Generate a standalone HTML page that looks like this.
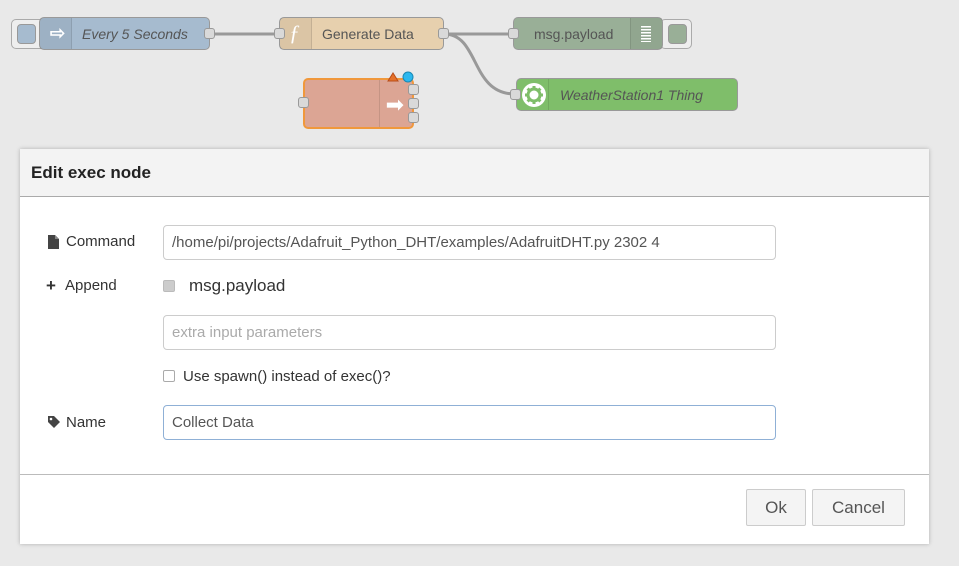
<!DOCTYPE html>
<html><head><style>
*{box-sizing:border-box;margin:0;padding:0}
body{width:959px;height:566px;background:#e9e9e9;font-family:"Liberation Sans",sans-serif;position:relative;overflow:hidden}
.a{position:absolute}
.node{position:absolute;border:1px solid #999;border-radius:5px;height:33px}
.port{position:absolute;width:11px;height:11px;background:#d9d9d9;border:1px solid #999;border-radius:3px}
.lbl{position:absolute;font-size:14px;color:#555;top:8px}
.inp{position:absolute;border:1px solid #ccc;border-radius:4px;height:35px;font-size:15px;color:#555;padding:8px 8px;background:#fff}
.fl{position:absolute;font-size:15px;color:#333}
.btn{position:absolute;border:1px solid #ccc;background:#f4f4f4;border-radius:2px;font-size:17px;color:#555;text-align:center;line-height:35px;height:37px}
</style></head><body>
<svg class="a" style="left:0;top:0" width="959" height="140">
<path d="M210 34 H280" stroke="#999" stroke-width="3" fill="none" stroke-linecap="round"/>
<path d="M444 34 H515" stroke="#999" stroke-width="3" fill="none"/>
<path d="M444 34 C480 34 470 94 515 94" stroke="#999" stroke-width="3" fill="none"/>
</svg>
<div class="a" style="left:11px;top:19px;width:36px;height:30px;border:1px solid #aaa;border-radius:5px;background:#eee"></div>
<div class="a" style="left:17px;top:24px;width:19px;height:20px;border-radius:4px;background:#a6bbcf;border:1px solid #999"></div>
<div class="node" style="left:39px;top:17px;width:171px;background:#a6bbcf"><div class="a" style="left:0;top:0;width:32px;height:31px;background:rgba(0,0,0,.05);border-right:1px solid rgba(0,0,0,.1)"></div><div class="a" style="left:10px;top:5px;color:#fff;font-size:18px;font-weight:bold">⇨</div><div class="lbl" style="left:42px;font-style:italic">Every 5 Seconds</div></div>
<div class="port" style="left:204px;top:28px"></div>
<div class="node" style="left:279px;top:17px;width:165px;background:#e7d0ae"><div class="a" style="left:0;top:0;width:32px;height:31px;background:rgba(0,0,0,.05);border-right:1px solid rgba(0,0,0,.1)"></div><div class="a" style="left:9px;top:2px;color:#fff;font-size:22px;font-style:italic;font-family:'Liberation Serif',serif">ƒ</div><div class="lbl" style="left:42px">Generate Data</div></div>
<div class="port" style="left:274px;top:28px"></div><div class="port" style="left:438px;top:28px"></div>
<div class="a" style="left:660px;top:19px;width:32px;height:30px;border:1px solid #aaa;border-radius:5px;background:#eee"></div>
<div class="a" style="left:668px;top:24px;width:19px;height:20px;border-radius:4px;background:#99af97;border:1px solid #999"></div>
<div class="node" style="left:513px;top:17px;width:150px;background:#99af97"><div class="a" style="right:0;top:0;width:32px;height:31px;background:rgba(0,0,0,.05);border-left:1px solid rgba(0,0,0,.1)"></div><div class="a" style="right:11px;top:8px;width:10px;height:16px;background:repeating-linear-gradient(#fff 0 1.5px,transparent 1.5px 3px)"></div><div class="lbl" style="left:20px">msg.payload</div></div>
<div class="port" style="left:508px;top:28px"></div>
<div class="node" style="left:516px;top:78px;width:222px;background:#7fbe6a"><div class="a" style="left:0;top:0;width:32px;height:31px;border-right:1px solid rgba(0,0,0,.1)"></div>
<svg class="a" style="left:4px;top:3px" width="26" height="26"><circle cx="13" cy="13" r="12" fill="#fff"/><circle cx="13" cy="13" r="6" fill="none" stroke="#7fbe6a" stroke-width="3"/><g stroke="#7fbe6a" stroke-width="3"><path d="M13 4V8M13 18V22M4 13H8M18 13H22M6.6 6.6L9.4 9.4M16.6 16.6L19.4 19.4M6.6 19.4L9.4 16.6M16.6 9.4L19.4 6.6"/></g></svg>
<div class="lbl" style="left:43px;font-style:italic">WeatherStation1 Thing</div></div>
<div class="port" style="left:510px;top:89px"></div>
<div class="a" style="left:303px;top:78px;width:111px;height:51px;border:2px solid #f0983c;border-radius:5px;background:#dca594"><div class="a" style="right:0;top:0;width:33px;height:47px;border-left:1px solid rgba(0,0,0,.1)"></div><div class="a" style="right:8px;top:12px;color:#fff;font-size:22px">➡</div></div>
<div class="port" style="left:298px;top:97px"></div>
<div class="port" style="left:408px;top:84px"></div><div class="port" style="left:408px;top:98px"></div><div class="port" style="left:408px;top:112px"></div>
<svg class="a" style="left:386px;top:70px" width="30" height="14"><path d="M2 11 L7 3 L12 11Z" fill="#e5722a" stroke="#b84d1a"/><circle cx="22" cy="7" r="5" fill="#2db8ee" stroke="#1a88b3"/></svg>
<div class="a" style="left:20px;top:149px;width:909px;height:395px;background:#fff;box-shadow:0 0 4px rgba(0,0,0,.25)">
<div class="a" style="left:0;top:0;width:909px;height:48px;background:#f3f3f3;border-bottom:1px solid #aaa"></div>
<div class="a" style="left:11px;top:14px;font-size:17px;font-weight:bold;color:#222">Edit exec node</div>
<div class="a" style="left:0;top:325px;width:909px;border-top:1px solid #bbb"></div>
</div>
<svg class="a" style="left:47px;top:234px" width="14" height="16"><path d="M1 1H8L12 5V15H1Z" fill="#444"/><path d="M8 1V5H12" fill="#888"/></svg>
<div class="fl" style="left:66px;top:233px">Command</div>
<div class="fl" style="left:46px;top:276px;font-weight:bold;font-size:17px">+</div>
<div class="fl" style="left:65px;top:277px">Append</div>
<svg class="a" style="left:47px;top:415px" width="14" height="14"><path d="M1 1H7L13 7L7 13L1 7Z" fill="#444"/><circle cx="4" cy="4" r="1.3" fill="#fff"/></svg>
<div class="fl" style="left:66px;top:414px">Name</div>
<div class="inp" style="left:163px;top:225px;width:613px">/home/pi/projects/Adafruit_Python_DHT/examples/AdafruitDHT.py 2302 4</div>
<div class="a" style="left:163px;top:280px;width:12px;height:12px;border-radius:2px;background:#ccc;border:1px solid #bbb"></div>
<div class="fl" style="left:189px;top:276px;font-size:17px">msg.payload</div>
<div class="inp" style="left:163px;top:315px;width:613px;color:#aaa">extra input parameters</div>
<div class="a" style="left:163px;top:370px;width:12px;height:12px;border-radius:2px;background:#fff;border:1px solid #aaa"></div>
<div class="fl" style="left:183px;top:368px">Use spawn() instead of exec()?</div>
<div class="inp" style="left:163px;top:405px;width:613px;border-color:#8fb0d6">Collect Data</div>
<div class="btn" style="left:746px;top:489px;width:60px">Ok</div>
<div class="btn" style="left:812px;top:489px;width:93px">Cancel</div>
</body></html>
